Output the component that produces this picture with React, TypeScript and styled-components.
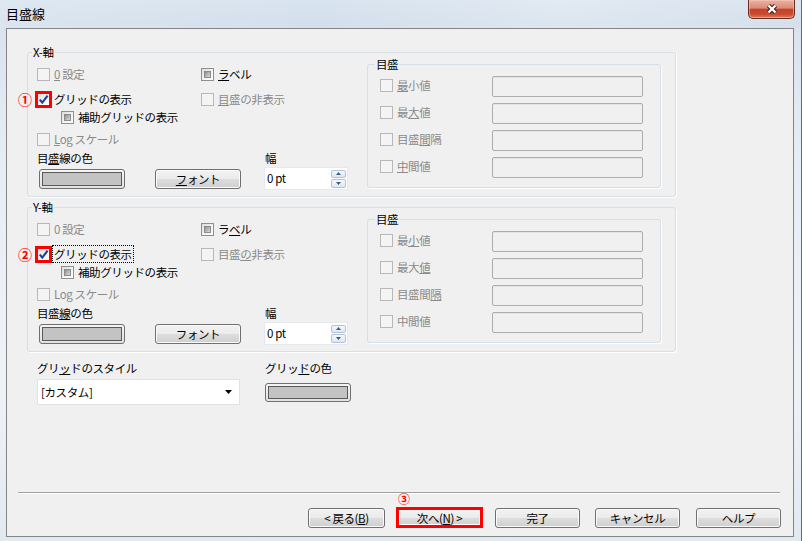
import React from 'react'
import styled, { createGlobalStyle } from 'styled-components'

type BoxState = 'disabled' | 'mixed' | 'checked'

const GlobalStyle = createGlobalStyle`
  html, body {
    margin: 0;
    padding: 0;
  }
  body {
    width: 802px;
    height: 541px;
    overflow: hidden;
    font-family: 'Noto Sans CJK JP', 'Noto Sans', sans-serif;
    font-size: 11.5px;
    letter-spacing: -0.4px;
    color: #000;
  }
  u {
    text-underline-offset: 1px;
  }
`

interface AxisLabels {
  zero: React.ReactNode
  label: React.ReactNode
  grid: React.ReactNode
  hide: React.ReactNode
  log: React.ReactNode
  lineColor: React.ReactNode
  font: React.ReactNode
  scale: React.ReactNode[]
}

interface AxisProps {
  title: string
  marker: string
  top: number
  focused?: boolean
  labels: AxisLabels
}

const CheckBox: React.FC<{ state: BoxState; highlight?: boolean }> = ({
  state,
  highlight
}) => (
  <Box $state={state} $highlight={highlight}>
    {state === 'mixed' && <MixedFill />}
    {state === 'checked' && (
      <svg width="11" height="11" viewBox="0 0 11 11">
        <path
          d="M1.8 5.6 L4.3 8.6 L9.6 1.6"
          fill="none"
          stroke="#1f3f95"
          strokeWidth="2.1"
        />
      </svg>
    )}
  </Box>
)

const CheckItem: React.FC<{
  state: BoxState
  highlight?: boolean
  children: React.ReactNode
}> = ({ state, highlight, children }) => (
  <CheckLabel $disabled={state === 'disabled'}>
    <CheckBox state={state} highlight={highlight} />
    <span>{children}</span>
  </CheckLabel>
)

const Axis: React.FC<AxisProps> = ({ title, marker, top, focused, labels }) => (
  <AxisBox $mt={top}>
    <GroupTitle $ml={4}>{title}</GroupTitle>
    <AxisBody>
      <LeftCol>
        <Row $h={20}>
          <Cell $w={164}>
            <CheckItem state="disabled">{labels.zero}</CheckItem>
          </Cell>
          <Cell>
            <CheckItem state="mixed">{labels.label}</CheckItem>
          </Cell>
        </Row>
        <Row $h={20} $mt={5}>
          <Cell $w={164}>
            <Marker>{marker}</Marker>
            <CheckItem state="checked" highlight>
              {focused ? <FocusText>{labels.grid}</FocusText> : labels.grid}
            </CheckItem>
          </Cell>
          <Cell>
            <CheckItem state="disabled">{labels.hide}</CheckItem>
          </Cell>
        </Row>
        <Row $h={16} $pl={24}>
          <CheckItem state="mixed">補助グリッドの表示</CheckItem>
        </Row>
        <Row $h={20} $mt={4}>
          <CheckItem state="disabled">{labels.log}</CheckItem>
        </Row>
        <FieldGrid>
          <FieldLabel>{labels.lineColor}</FieldLabel>
          <span />
          <FieldLabel $ml={1}>幅</FieldLabel>
          <ColorSwatch $ml={2} $h={20}>
            <SwatchFill />
          </ColorSwatch>
          <PushButton $w={86}>
            <span>{labels.font}</span>
          </PushButton>
          <SpinBox>
            <SpinText>0 pt</SpinText>
            <SpinButtons>
              <SpinBtn $h={8}>
                <svg width="5" height="3" viewBox="0 0 5 3">
                  <path d="M0 3 L2.5 0 L5 3 Z" fill="#3e5a86" />
                </svg>
              </SpinBtn>
              <SpinBtn $h={9}>
                <svg width="5" height="3" viewBox="0 0 5 3">
                  <path d="M0 0 L5 0 L2.5 3 Z" fill="#3e5a86" />
                </svg>
              </SpinBtn>
            </SpinButtons>
          </SpinBox>
        </FieldGrid>
      </LeftCol>
      <ScaleBox>
        <GroupTitle $ml={7}>目盛</GroupTitle>
        <ScaleBody>
          {labels.scale.map((text, i) => (
            <ScaleRow key={i}>
              <ScaleCheckCell>
                <CheckItem state="disabled">{text}</CheckItem>
              </ScaleCheckCell>
              <ScaleInput />
            </ScaleRow>
          ))}
        </ScaleBody>
      </ScaleBox>
    </AxisBody>
  </AxisBox>
)

const xLabels: AxisLabels = {
  zero: (
    <>
      <u>0</u> 設定
    </>
  ),
  label: (
    <>
      <u>ラ</u>ベル
    </>
  ),
  grid: 'グリッドの表示',
  hide: (
    <>
      <u>目</u>盛の非表示
    </>
  ),
  log: (
    <>
      <u>L</u>og スケール
    </>
  ),
  lineColor: (
    <>
      目<u>盛</u>線の色
    </>
  ),
  font: (
    <>
      <u>フ</u>ォント
    </>
  ),
  scale: [
    <>
      <u>最</u>小値
    </>,
    <>
      最<u>大</u>値
    </>,
    <>
      目盛<u>間</u>隔
    </>,
    <>
      <u>中</u>間値
    </>
  ]
}

const yLabels: AxisLabels = {
  zero: '0 設定',
  label: (
    <>
      ラ<u>ベ</u>ル
    </>
  ),
  grid: 'グリッドの表示',
  hide: (
    <>
      目盛<u>の</u>非表示
    </>
  ),
  log: (
    <>
      Lo<u>g</u> スケール
    </>
  ),
  lineColor: (
    <>
      目盛<u>線</u>の色
    </>
  ),
  font: 'フォント',
  scale: [
    <>
      最<u>小</u>値
    </>,
    <>
      最大<u>値</u>
    </>,
    <>
      目盛間<u>隔</u>
    </>,
    '中間値'
  ]
}

const App: React.FC = () => (
  <>
    <GlobalStyle />
    <Frame>
      <TitleBar>
        <WindowTitle>目盛線</WindowTitle>
        <CloseButton>
          <svg width="14" height="12" viewBox="0 0 14 12">
            <path
              d="M3.5 2.5 L10.5 9.5 M10.5 2.5 L3.5 9.5"
              stroke="#3b1c16"
              strokeWidth="4.4"
            />
            <path
              d="M3.5 2.5 L10.5 9.5 M10.5 2.5 L3.5 9.5"
              stroke="#ffffff"
              strokeWidth="2.4"
            />
          </svg>
        </CloseButton>
      </TitleBar>
      <Client>
        <Axis title="X-軸" marker="①" top={23} labels={xLabels} />
        <Axis title="Y-軸" marker="②" top={10} focused labels={yLabels} />
        <GridStyleSection>
          <FieldLabel>
            グリ<u>ッ</u>ドのスタイル
          </FieldLabel>
          <FieldLabel>
            グリッ<u>ド</u>の色
          </FieldLabel>
          <Combo>
            <span>[カスタム]</span>
            <svg width="7" height="4" viewBox="0 0 7 4">
              <path d="M0 0 L7 0 L3.5 4 Z" fill="#000" />
            </svg>
          </Combo>
          <ColorSwatch $h={19}>
            <SwatchFill />
          </ColorSwatch>
        </GridStyleSection>
        <Separator />
        <ButtonRow>
          <DialogButton $w={77}>
            <span>
              &lt; 戻る(<u>B</u>)
            </span>
          </DialogButton>
          <DialogButton $w={87} $ml={11} $hl>
            <StepMark>③</StepMark>
            <span>
              次へ(<u>N</u>) &gt;
            </span>
          </DialogButton>
          <DialogButton $w={85} $ml={12}>
            <span>完了</span>
          </DialogButton>
          <DialogButton $w={85} $ml={15}>
            <span>キャンセル</span>
          </DialogButton>
          <DialogButton $w={85} $ml={16}>
            <span>ヘルプ</span>
          </DialogButton>
        </ButtonRow>
      </Client>
    </Frame>
  </>
)

export default App

const Frame = styled.div`
  width: 802px;
  height: 541px;
  box-sizing: border-box;
  display: flex;
  flex-direction: column;
  padding: 0 7px 4px 6px;
  border-right: 1px solid #5f6d7b;
  background: linear-gradient(
    180deg,
    #e3ebf3 0%,
    #d9e3ed 4%,
    #e6edf4 30%,
    #eef3f8 70%,
    #e2e9f0 100%
  );
`

const TitleBar = styled.div`
  height: 28px;
  margin: 0 -7px 0 -6px;
  display: flex;
  justify-content: space-between;
  align-items: flex-start;
  background: linear-gradient(
    90deg,
    rgba(220, 230, 240, 0.6) 0%,
    rgba(205, 220, 235, 0.5) 40%,
    rgba(225, 233, 242, 0.6) 70%,
    rgba(210, 222, 236, 0.5) 100%
  );
`

const WindowTitle = styled.div`
  padding: 5px 0 0 6px;
  font-size: 13px;
  letter-spacing: 0;
  line-height: 18px;
  color: #000;
`

const CloseButton = styled.div`
  width: 47px;
  height: 19px;
  margin-right: 6px;
  box-sizing: border-box;
  display: flex;
  align-items: center;
  justify-content: center;
  border: 1px solid #6b2a1f;
  border-top: none;
  border-radius: 0 0 5px 5px;
  background: linear-gradient(
    180deg,
    #e9b3a5 0%,
    #dc8a76 45%,
    #c6432b 52%,
    #c84a30 78%,
    #df7d5c 100%
  );
  box-shadow: inset 0 0 0 1px rgba(255, 210, 200, 0.45);
`

const Client = styled.div`
  flex: 1;
  display: flex;
  flex-direction: column;
  border: 1px solid #858585;
  background: #f0f0f0;
`

const AxisBox = styled.div<{ $mt: number }>`
  width: 649px;
  height: 145px;
  box-sizing: border-box;
  margin: ${p => p.$mt}px 0 0 20px;
  border: 1px solid #d5dfe5;
  border-radius: 3px;
  box-shadow: 1px 1px 0 #fff;
`

const GroupTitle = styled.div<{ $ml: number }>`
  width: fit-content;
  height: 14px;
  margin: -8px 0 0 ${p => p.$ml}px;
  padding: 0 1px;
  line-height: 14px;
  background: #f0f0f0;
  color: #000;
`

const AxisBody = styled.div`
  display: flex;
  margin-top: 5px;
  padding-left: 9px;
`

const LeftCol = styled.div`
  width: 330px;
  display: flex;
  flex-direction: column;
`

const Row = styled.div<{ $h: number; $mt?: number; $pl?: number }>`
  display: flex;
  align-items: center;
  height: ${p => p.$h}px;
  margin-top: ${p => p.$mt || 0}px;
  padding-left: ${p => p.$pl || 0}px;
`

const Cell = styled.div<{ $w?: number }>`
  position: relative;
  display: flex;
  align-items: center;
  width: ${p => (p.$w ? `${p.$w}px` : 'auto')};
`

const Marker = styled.span`
  position: absolute;
  left: -19px;
  top: 50%;
  transform: translateY(-50%);
  color: #ff0000;
  font-size: 14px;
  font-weight: bold;
  letter-spacing: 0;
  line-height: 14px;
`

const CheckLabel = styled.span<{ $disabled: boolean }>`
  display: inline-flex;
  align-items: center;
  gap: 4px;
  line-height: 14px;
  white-space: nowrap;
  color: ${p => (p.$disabled ? '#8a8a8a' : '#000')};
`

const Box = styled.span<{ $state: BoxState; $highlight?: boolean }>`
  width: 13px;
  height: 13px;
  flex-shrink: 0;
  box-sizing: border-box;
  display: flex;
  align-items: center;
  justify-content: center;
  border: 1px solid ${p => (p.$state === 'disabled' ? '#b8b8b8' : '#8e8f8f')};
  background: ${p =>
    p.$state === 'disabled'
      ? '#f4f4f4'
      : 'linear-gradient(135deg, #dcdcdc 0%, #f6f6f6 60%, #ffffff 100%)'};
  outline: ${p => (p.$highlight ? '3px solid #ff0000' : 'none')};
  outline-offset: -1px;
`

const MixedFill = styled.span`
  width: 7px;
  height: 7px;
  box-sizing: border-box;
  border: 1px solid #8c8c8c;
  background: linear-gradient(135deg, #8f8f8f 0%, #bdbdbd 60%, #dcdcdc 100%);
`

const FocusText = styled.span`
  margin-left: -2px;
  padding: 0 1px;
  border: 1px dotted #000;
  line-height: 12px;
`

const FieldGrid = styled.div`
  display: grid;
  grid-template-columns: 118px 109px 84px;
  grid-template-rows: 18px 23px;
  align-items: center;
`

const FieldLabel = styled.span<{ $ml?: number }>`
  margin-left: ${p => p.$ml || 0}px;
  line-height: 14px;
  white-space: nowrap;
  color: #000;
`

const ColorSwatch = styled.div<{ $ml?: number; $h: number }>`
  width: 86px;
  height: ${p => p.$h}px;
  margin-left: ${p => p.$ml || 0}px;
  box-sizing: border-box;
  padding: 2px;
  border: 1px solid #707070;
  border-radius: 3px;
  background: linear-gradient(180deg, #f4f4f4, #e2e2e2);
  align-self: center;
`

const SwatchFill = styled.div`
  height: 100%;
  box-sizing: border-box;
  border: 1px solid #5a5a5a;
  background: #c3c3c3;
`

const PushButton = styled.button<{ $w: number }>`
  width: ${p => p.$w}px;
  height: 20px;
  box-sizing: border-box;
  padding: 0;
  display: flex;
  align-items: center;
  justify-content: center;
  border: 1px solid #707070;
  border-radius: 3px;
  background: linear-gradient(
    180deg,
    #f2f2f2 0%,
    #ebebeb 50%,
    #dddddd 51%,
    #cfcfcf 100%
  );
  box-shadow: inset 0 0 0 1px #fbfbfb;
  font-family: inherit;
  font-size: inherit;
  letter-spacing: inherit;
  line-height: 14px;
  color: #000;
`

const SpinBox = styled.div`
  width: 84px;
  height: 23px;
  box-sizing: border-box;
  display: flex;
  background: #fff;
  border: 1px solid #e6eaef;
`

const SpinText = styled.span`
  flex: 1;
  padding: 3px 0 0 2px;
  line-height: 14px;
`

const SpinButtons = styled.div`
  width: 17px;
  box-sizing: border-box;
  display: flex;
  flex-direction: column;
  justify-content: center;
  gap: 1px;
  padding: 0 1px;
`

const SpinBtn = styled.div<{ $h: number }>`
  height: ${p => p.$h}px;
  box-sizing: border-box;
  display: flex;
  align-items: center;
  justify-content: center;
  border: 1px solid #b4c2d3;
  border-radius: 2px;
  background: linear-gradient(180deg, #f4f8fc 0%, #dde7f2 100%);
`

const ScaleBox = styled.div`
  width: 294px;
  height: 124px;
  box-sizing: border-box;
  border: 1px solid #d5dfe5;
  border-radius: 3px;
  box-shadow: 1px 1px 0 #fff;
`

const ScaleBody = styled.div`
  display: flex;
  flex-direction: column;
  gap: 6px;
  margin-top: 5px;
  padding-left: 12px;
`

const ScaleRow = styled.div`
  display: flex;
  align-items: center;
  height: 21px;
`

const ScaleCheckCell = styled.div`
  width: 112px;
`

const ScaleInput = styled.div`
  width: 151px;
  height: 21px;
  box-sizing: border-box;
  border: 1px solid #adadad;
  border-radius: 2px;
  background: #f0f0f0;
  box-shadow: inset 0 1px 0 #e4e4e4;
`

const GridStyleSection = styled.div`
  display: grid;
  grid-template-columns: 228px auto;
  grid-template-rows: 18px 26px;
  align-items: start;
  margin: 9px 0 0 30px;
`

const Combo = styled.div`
  width: 203px;
  height: 26px;
  box-sizing: border-box;
  display: flex;
  align-items: center;
  justify-content: space-between;
  padding: 0 7px 0 3px;
  background: #fff;
  border: 1px solid #e2e2e2;
  line-height: 14px;
`

const Separator = styled.div`
  margin: auto 13px 13px 11px;
  height: 0;
  border-top: 1px solid #a0a0a0;
  border-bottom: 1px solid #ffffff;
`

const ButtonRow = styled.div`
  display: flex;
  align-items: flex-end;
  justify-content: flex-end;
  padding-right: 12px;
  margin-bottom: 8px;
`

const DialogButton = styled.button<{ $w: number; $ml?: number; $hl?: boolean }>`
  position: relative;
  width: ${p => p.$w}px;
  height: ${p => (p.$hl ? 21 : 20)}px;
  margin-left: ${p => p.$ml || 0}px;
  box-sizing: border-box;
  padding: 0;
  display: flex;
  align-items: center;
  justify-content: center;
  border: ${p => (p.$hl ? '3px solid #ff0000' : '1px solid #707070')};
  border-radius: ${p => (p.$hl ? 0 : 3)}px;
  background: linear-gradient(
    180deg,
    #f2f2f2 0%,
    #ebebeb 50%,
    #dddddd 51%,
    #cfcfcf 100%
  );
  box-shadow: inset 0 0 0 1px #fbfbfb;
  font-family: inherit;
  font-size: inherit;
  letter-spacing: inherit;
  line-height: 14px;
  color: #000;
  white-space: nowrap;
`

const StepMark = styled.span`
  position: absolute;
  left: -1px;
  top: -18px;
  color: #ff0000;
  font-size: 12px;
  font-weight: bold;
  letter-spacing: 0;
  line-height: 14px;
`
